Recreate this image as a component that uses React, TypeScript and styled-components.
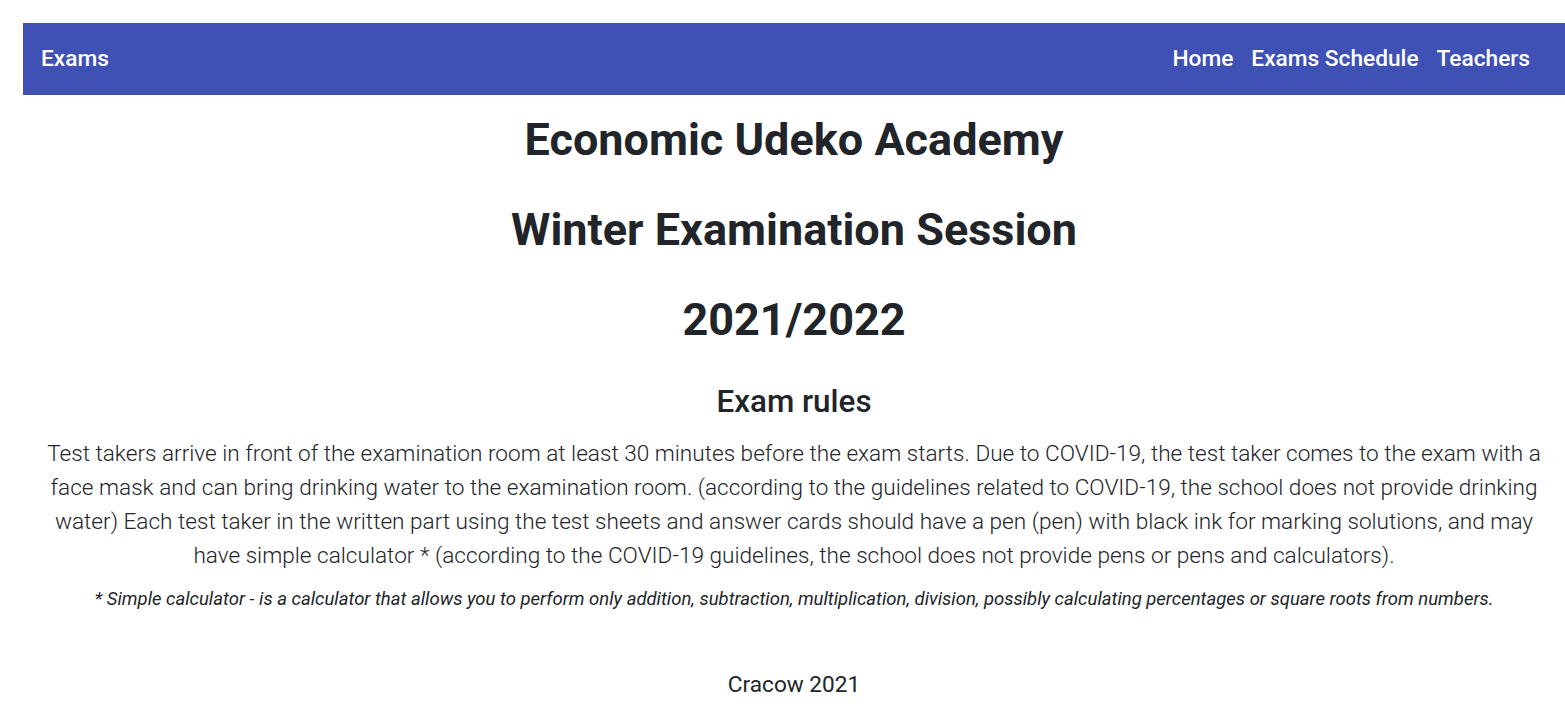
import React from 'react'
import styled, { createGlobalStyle } from 'styled-components'

const GlobalStyle = createGlobalStyle`
    body {
        margin: 0;
        font-family: Roboto, "Liberation Sans", sans-serif;
        color: #212529;
        background: #fff;
    }
`;

const Page = styled.div`
    padding: 23px 0 0 23px;
`;

const NavBar = styled.nav`
    height: 72px;
    box-sizing: border-box;
    background: #3f51b5;
    display: flex;
    align-items: center;
    justify-content: space-between;
    padding: 0 35px 2px 18px;
`;

const Brand = styled.a`
    color: #fff;
    font-size: 22.7px;
    font-weight: 500;
    text-decoration: none;
`;

const NavLinks = styled.div`
    display: flex;
    gap: 18px;
`;

const NavLink = styled.a`
    color: #fff;
    font-size: 22.7px;
    font-weight: 500;
    text-decoration: none;
`;

const Main = styled.main`
    text-align: center;
    padding: 0 20px;
`;

const Title = styled.h1`
    font-size: 45px;
    font-weight: 700;
    line-height: 48px;
    margin: 0;
    padding: 21px 0;
`;

const Subtitle = styled.h2`
    font-size: 31.4px;
    font-weight: 500;
    line-height: 36px;
    margin: 19px 0 17px;
`;

const Rules = styled.p`
    font-size: 22.6px;
    font-weight: 300;
    line-height: 34px;
    margin: 0;
`;

const Note = styled.p`
    font-size: 18.5px;
    font-style: italic;
    line-height: 24px;
    margin: 14px 0 0;
`;

const Footer = styled.footer`
    text-align: center;
    font-size: 22.6px;
    line-height: 24px;
    margin-top: 62px;
`;

const App = () => {
    return (
        <>
            <GlobalStyle />
            <Page>
                <NavBar>
                    <Brand href="#">Exams</Brand>
                    <NavLinks>
                        <NavLink href="#">Home</NavLink>
                        <NavLink href="#">Exams Schedule</NavLink>
                        <NavLink href="#">Teachers</NavLink>
                    </NavLinks>
                </NavBar>

                <Main>
                    <Title>Economic Udeko Academy</Title>
                    <Title>Winter Examination Session</Title>
                    <Title>2021/2022</Title>

                    <Subtitle>Exam rules</Subtitle>
                    <Rules>
                        Test takers arrive in front of the examination room at least 30 minutes before the exam starts. Due to COVID-19, the test taker comes to the exam with a face mask and can bring drinking water to the examination room. (according to the guidelines related to COVID-19, the school does not provide drinking water) Each test taker in the written part using the test sheets and answer cards should have a pen (pen) with black ink for marking solutions, and may have simple calculator * (according to the COVID-19 guidelines, the school does not provide pens or pens and calculators).
                    </Rules>
                    <Note>
                        * Simple calculator - is a calculator that allows you to perform only addition, subtraction, multiplication, division, possibly calculating percentages or square roots from numbers.
                    </Note>
                </Main>

                <Footer>Cracow 2021</Footer>
            </Page>
        </>
    )
}

export default App;
